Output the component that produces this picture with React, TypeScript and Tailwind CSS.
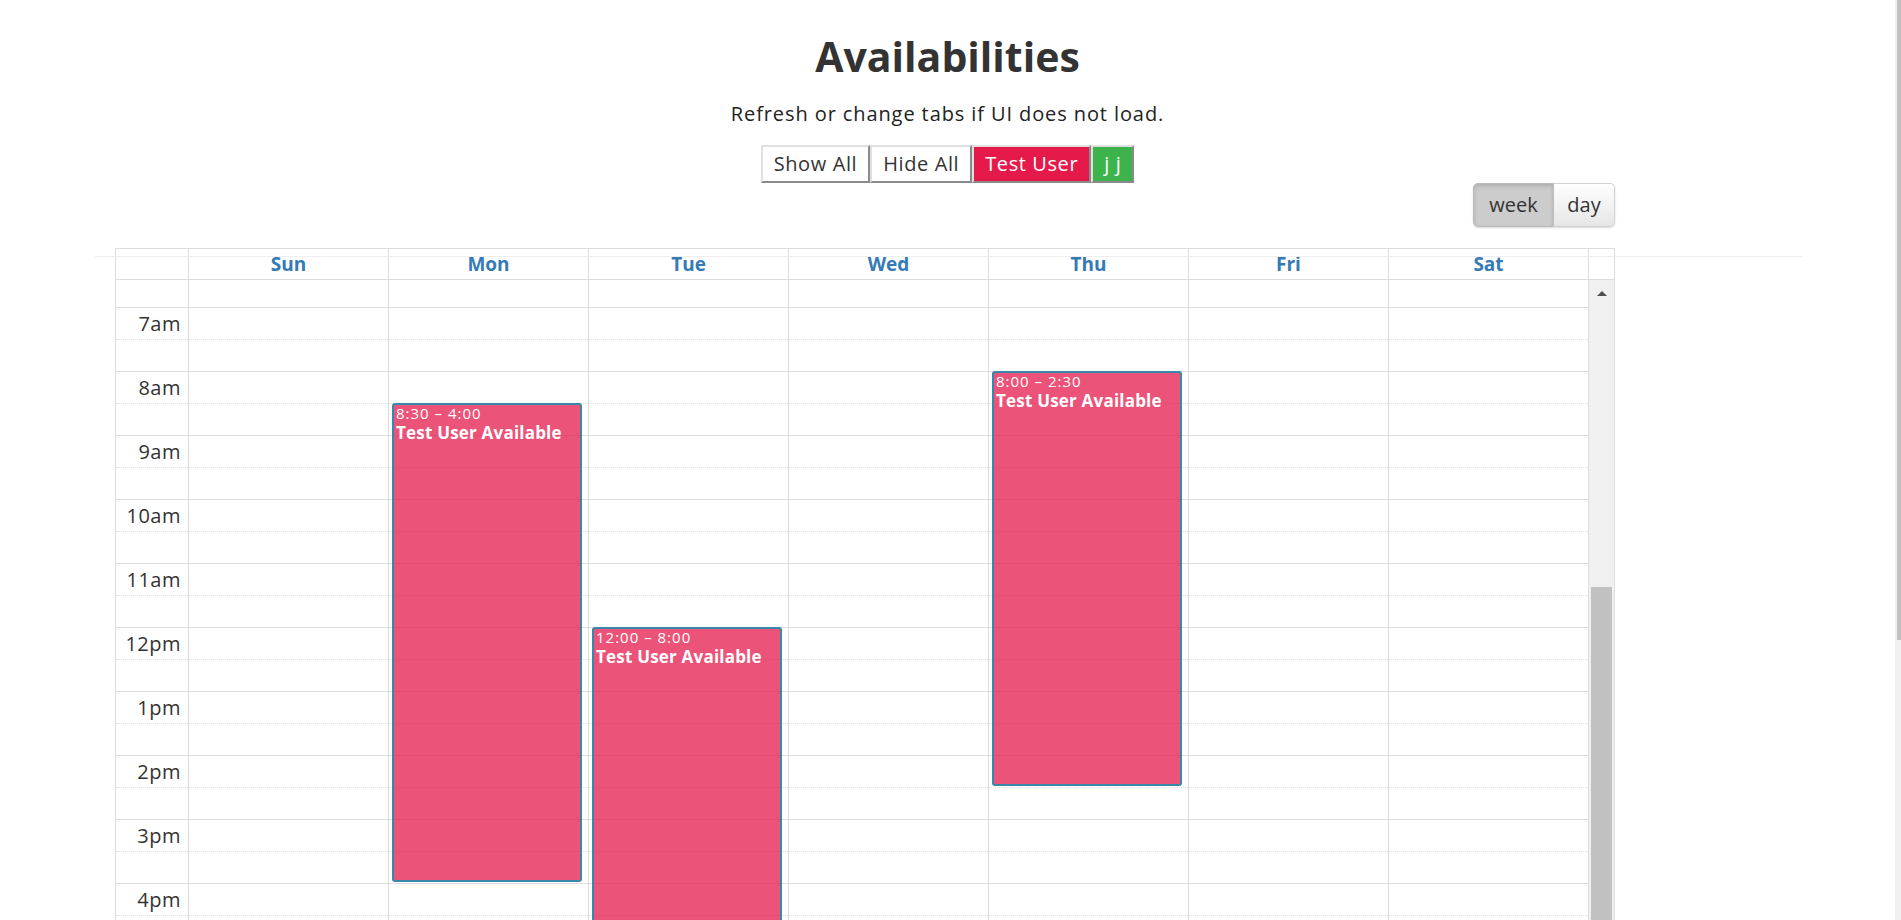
import React from "react";

const days = ["Sun", "Mon", "Tue", "Wed", "Thu", "Fri", "Sat"];
const hours = [7, 8, 9, 10, 11, 12, 13, 14, 15, 16, 17];

const events = [
  { day: 1, start: 8.5, end: 16, time: "8:30 – 4:00" },
  { day: 2, start: 12, end: 20, time: "12:00 – 8:00" },
  { day: 4, start: 8, end: 14.5, time: "8:00 – 2:30" },
];

function hourLabel(h: number) {
  if (h === 12) return "12pm";
  return h > 12 ? `${h - 12}pm` : `${h}am`;
}

function Slots({ axis }: { axis?: boolean }) {
  return (
    <>
      <div className="h-[27px]" />
      {hours.map((h) => (
        <React.Fragment key={h}>
          <div className="h-[32px] border-t border-[#ddd] flex items-center justify-end pr-[7px] text-[20px] leading-[24px] tracking-[0.5px] text-[#333]">
            {axis ? hourLabel(h) : null}
          </div>
          <div className="h-[32px] border-t border-dotted border-[#ddd]" />
        </React.Fragment>
      ))}
    </>
  );
}

const btn =
  "h-[38px] px-[11px] text-[20px] tracking-[0.6px] border-2 border-t-[#e0e0e0] border-l-[#e0e0e0] border-b-[#8a8a8a] border-r-[#8a8a8a]";

export default function App() {
  return (
    <div className="relative flex h-[920px] w-full overflow-hidden bg-white font-['Open_Sans',sans-serif] text-[#333]">
      <div className="flex-1 flex flex-col">
        {/* Header */}
        <h1 className="mt-[31px] text-center text-[41px] leading-[50px] font-bold text-[#333]">Availabilities</h1>
        <p className="mt-[19px] text-center text-[20px] leading-[28px] tracking-[0.9px] text-[#222]">
          Refresh or change tabs if UI does not load.
        </p>
        <div className="mt-[17px] flex justify-center">
          <button className={`${btn} bg-white text-[#333]`}>Show All</button>
          <button className={`${btn} bg-white text-[#333]`}>Hide All</button>
          <button className={`${btn} bg-[#e6194b] text-white`}>Test User</button>
          <button className={`${btn} bg-[#3cb44b] text-white`}>j j</button>
        </div>

        <div className="ml-[115px] w-[1500px]">
          {/* View switch */}
          <div className="flex justify-end">
            <div className="flex h-[44px] rounded-[5px] shadow-[0_1px_2px_rgba(0,0,0,0.15)]">
              <button className="w-[81px] rounded-l-[5px] border border-[#bbb] bg-[#cccccc] text-[20px] text-[#333] shadow-[inset_0_2px_4px_rgba(0,0,0,0.15)]">
                week
              </button>
              <button className="w-[61px] rounded-r-[5px] border border-l-0 border-[#d0d0d0] bg-gradient-to-b from-white to-[#e6e6e6] text-[20px] text-[#333]">
                day
              </button>
            </div>
          </div>

          {/* Calendar */}
          <div className="mt-[21px] border border-[#ddd]">
            <div className="grid grid-cols-[73px_repeat(7,200px)_25px] h-[31px] border-b border-[#ddd]">
              <div className="border-r border-[#ddd]" />
              {days.map((d) => (
                <div
                  key={d}
                  className="border-r border-[#ddd] flex items-center justify-center text-[19px] font-bold text-[#337ab7]"
                >
                  {d}
                </div>
              ))}
              <div />
            </div>
            <div className="grid grid-cols-[73px_repeat(7,200px)_25px] h-[700px]">
              <div className="border-r border-[#ddd]">
                <Slots axis />
              </div>
              {days.map((d, i) => (
                <div key={d} className="relative border-r border-[#ddd]">
                  <Slots />
                  {events
                    .filter((e) => e.day === i)
                    .map((e) => (
                      <div
                        key={e.time}
                        className="absolute left-[3px] right-[6px] rounded-[3px] border-2 border-[#3a87ad] bg-[rgba(230,25,75,0.75)] px-[2px] text-white"
                        style={{ top: 27 + (e.start - 7) * 64, height: (e.end - e.start) * 64 - 1 }}
                      >
                        <div className="text-[15px] leading-[17px] tracking-[1px]">{e.time}</div>
                        <div className="text-[17px] leading-[22px] font-bold tracking-[0.2px]">Test User Available</div>
                      </div>
                    ))}
                </div>
              ))}
              <div className="relative bg-[#f0f0f0] flex flex-col items-center">
                <div className="mt-[11px] h-0 w-0 border-x-[5px] border-b-[5px] border-x-transparent border-b-[#505050]" />
                <div className="mt-[291px] h-[400px] w-[21px] bg-[#c1c1c1]" />
              </div>
            </div>
          </div>
        </div>
      </div>

      {/* page scrollbar */}
      <div className="w-[6px] bg-[#f1f1f1] flex justify-end">
        <div className="h-[640px] w-[4px] bg-[#c1c1c1]" />
      </div>

      {/* horizontal rule crossing the header */}
      <div className="absolute left-[95px] top-[256px] h-px w-[1708px] bg-[#eee] z-10" />
    </div>
  );
}
